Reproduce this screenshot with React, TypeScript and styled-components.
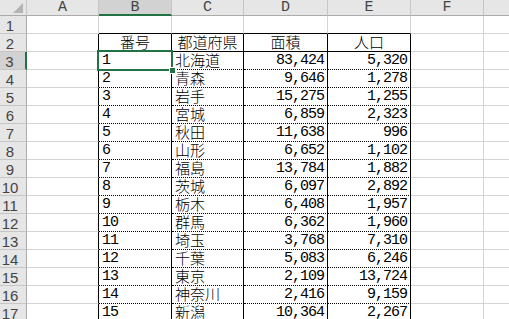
import React from "react";
import styled, { createGlobalStyle, css } from "styled-components";

type Line = "grid" | "solid" | "dotted";

const COLS = ["A", "B", "C", "D", "E", "F", ""];
const WIDTHS = [27, 72, 73, 72, 84, 83, 73, 60];

const data: [string, string, string, string][] = [
	["1", "北海道", "83,424", "5,320"],
	["2", "青森", "9,646", "1,278"],
	["3", "岩手", "15,275", "1,255"],
	["4", "宮城", "6,859", "2,323"],
	["5", "秋田", "11,638", "996"],
	["6", "山形", "6,652", "1,102"],
	["7", "福島", "13,784", "1,882"],
	["8", "茨城", "6,097", "2,892"],
	["9", "栃木", "6,408", "1,957"],
	["10", "群馬", "6,362", "1,960"],
	["11", "埼玉", "3,768", "7,310"],
	["12", "千葉", "5,083", "6,246"],
	["13", "東京", "2,109", "13,724"],
	["14", "神奈川", "2,416", "9,159"],
	["15", "新潟", "10,364", "2,267"],
];

const ROW_COUNT = 17;
const SELECTED_ROW = 3;
const SELECTED_COL = 1;

// what goes in a cell, by row (1-based) and column (0 = A)
const cellText = (row: number, col: number): string => {
	if (row === 2) {
		return ["", "番号", "都道府県", "面積", "人口"][col] ?? "";
	}
	const rec = data[row - 3];
	if (!rec || col < 1 || col > 4) return "";
	return rec[col - 1];
};

const cellAlign = (row: number, col: number) => {
	if (row === 2) return "center";
	if (col === 3 || col === 4) return "right";
	return "left";
};

const rightLine = (row: number, col: number): Line =>
	row >= 2 && col >= 0 && col <= 4 ? "solid" : "grid";

const bottomLine = (row: number, col: number): Line => {
	if (col < 1 || col > 4) return "grid";
	if (row === 1 || row === 2) return "solid";
	return "dotted";
};

const lineCss = (l: Line) =>
	l === "solid"
		? "1px solid #000"
		: l === "dotted"
		? "1px dotted #000"
		: "1px solid #d4d4d4";

const App: React.FC = () => {
	const rows = Array.from({ length: ROW_COUNT }, (_, i) => i + 1);

	return (
		<>
			<GlobalStyle />
			<Sheet>
				<Corner>
					<CornerMark />
				</Corner>
				{COLS.map((c, i) => (
					<ColHeader key={c + i} $selected={i === SELECTED_COL}>
						{c}
					</ColHeader>
				))}

				{rows.map((r) => (
					<React.Fragment key={r}>
						<RowHeader $selected={r === SELECTED_ROW}>{r}</RowHeader>
						{COLS.map((_, c) => {
							const text = cellText(r, c);
							const isNum = /^[\d,]+$/.test(text);
							return (
								<Cell
									key={c}
									$right={rightLine(r, c)}
									$bottom={bottomLine(r, c)}
									$align={cellAlign(r, c)}
								>
									{text && (isNum ? <Num>{text}</Num> : <Jp>{text}</Jp>)}
									{r === SELECTED_ROW && c === SELECTED_COL && (
										<Selection>
											<FillHandle />
										</Selection>
									)}
								</Cell>
							);
						})}
					</React.Fragment>
				))}
			</Sheet>
		</>
	);
};

// ================== styles ========================
const GlobalStyle = createGlobalStyle`
	html, body {
		margin: 0;
		padding: 0;
		background: #fff;
		overflow: hidden;
	}
	#root {
		width: 509px;
		height: 319px;
		overflow: hidden;
	}
`;

const Sheet = styled.div`
	display: grid;
	grid-template-columns: ${WIDTHS.map((w) => `${w}px`).join(" ")};
	grid-template-rows: 16px repeat(${ROW_COUNT}, 18px);
	width: 509px;
	height: 319px;
	overflow: hidden;
	background: #fff;
`;

const headerBase = css`
	box-sizing: border-box;
	background: #e6e6e6;
	color: #444;
	display: flex;
	align-items: center;
	justify-content: center;
	line-height: 15px;
`;

const Corner = styled.div`
	${headerBase};
	position: relative;
	border-right: 1px solid #c6c6c6;
	border-bottom: 1px solid #ababab;
`;

const CornerMark = styled.span`
	position: absolute;
	right: 3px;
	bottom: 2px;
	width: 10px;
	height: 10px;
	background: #b4b4b4;
	clip-path: polygon(100% 0, 100% 100%, 0 100%);
`;

const ColHeader = styled.div<{ $selected: boolean }>`
	${headerBase};
	font-family: "Liberation Mono", monospace;
	font-size: 15px;
	border-right: 1px solid #c6c6c6;
	background: ${({ $selected }) => ($selected ? "#d2d2d2" : "#e6e6e6")};
	border-bottom: ${({ $selected }) =>
		$selected ? "2px solid #217346" : "1px solid #ababab"};
`;

const RowHeader = styled.div<{ $selected: boolean }>`
	${headerBase};
	font-family: "Liberation Sans", Arial, sans-serif;
	font-size: 15px;
	padding-right: 6px;
	padding-top: 1px;
	border-bottom: 1px solid #c6c6c6;
	background: ${({ $selected }) => ($selected ? "#d2d2d2" : "#e6e6e6")};
	border-right: ${({ $selected }) =>
		$selected ? "2px solid #217346" : "1px solid #ababab"};
`;

const Cell = styled.div<{ $right: Line; $bottom: Line; $align: string }>`
	position: relative;
	box-sizing: border-box;
	display: flex;
	align-items: flex-end;
	justify-content: ${({ $align }) =>
		$align === "right" ? "flex-end" : $align === "center" ? "center" : "flex-start"};
	padding: 0 3px 1px 3px;
	border-right: ${({ $right }) => lineCss($right)};
	border-bottom: ${({ $bottom }) => lineCss($bottom)};
	color: #000;
	white-space: nowrap;
`;

const Num = styled.span`
	font-family: "Liberation Mono", monospace;
	font-size: 15px;
	letter-spacing: -1px;
	line-height: 15px;
`;

const Jp = styled.span`
	font-family: "Noto Sans CJK JP", sans-serif;
	font-size: 15px;
	font-weight: 300;
	line-height: 15px;
	margin-bottom: 1px;
`;

const Selection = styled.span`
	position: absolute;
	left: -2px;
	top: -2px;
	right: -2px;
	bottom: -2px;
	border: 2px solid #217346;
	pointer-events: none;
	z-index: 2;
`;

const FillHandle = styled.span`
	position: absolute;
	right: -5px;
	bottom: -5px;
	width: 5px;
	height: 5px;
	background: #217346;
	border: 1px solid #fff;
`;

export default App;
